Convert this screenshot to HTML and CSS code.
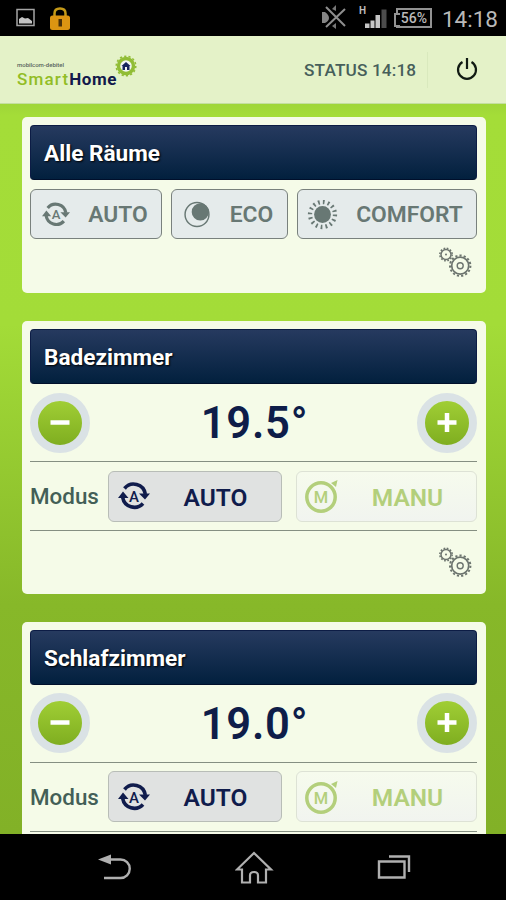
FILE: index.html
```
<!DOCTYPE html>
<html lang="de">
<head>
	<meta charset="utf-8">
	<title>SmartHome</title>
	<link rel="stylesheet" href="styles.css">
</head>
<body>
	<svg class="defs">
		<symbol id="auto" viewBox="0 0 32 30">
			<path d="M6.500 7.500A11.800 11.800 0 0 1 27.300 13M25 22.500A11.800 11.800 0 0 1 4.700 16.500" fill="none" stroke="currentColor" stroke-width="3.600"/>
			<path d="M21 12.500H32L27 18.500ZM0 17H10.500L5 10.500Z" fill="currentColor"/>
			<text x="16" y="20.500" text-anchor="middle" font-size="15" font-weight="500" fill="currentColor">A</text>
		</symbol>
		<symbol id="manu" viewBox="0 0 34 34">
			<circle cx="16" cy="18" r="14.200" fill="none" stroke="currentColor" stroke-width="3.500"/>
			<path d="M26 4L32.500 1L31 8Z" fill="currentColor"/>
			<text x="16" y="24" text-anchor="middle" font-size="16.500" font-weight="500" fill="currentColor">M</text>
		</symbol>
		<symbol id="moon" viewBox="0 0 26 26">
			<circle cx="13" cy="13" r="11.500" fill="none" stroke="currentColor" stroke-width="1.400"/>
			<circle cx="16.200" cy="10.500" r="8.300" fill="currentColor"/>
		</symbol>
		<symbol id="sun" viewBox="0 0 32 32">
			<circle cx="16" cy="16" r="8.700" fill="currentColor"/>
			<circle cx="16" cy="16" r="12.900" fill="none" stroke="currentColor" stroke-width="4.400" stroke-dasharray="1.800 3.266"/>
		</symbol>
		<symbol id="gears" viewBox="0 0 34 32">
			<g fill="none" stroke="currentColor">
				<circle cx="7" cy="7.500" r="5" stroke-width="1.500"/>
				<circle cx="7" cy="7.500" r="6.200" stroke-width="1.500" stroke-dasharray="1.700 1.546"/>
				<circle cx="21.200" cy="18.700" r="8.500" stroke-width="1.700"/>
				<circle cx="21.200" cy="18.700" r="10.200" stroke-width="2" stroke-dasharray="2.200 2.073"/>
				<circle cx="21.200" cy="18.700" r="3" stroke-width="1.400"/>
			</g>
			<circle cx="7" cy="7.500" r="1" fill="currentColor"/>
		</symbol>
		<symbol id="minus" viewBox="0 0 20 20">
			<path d="M.5 9.500H19.500" stroke="currentColor" stroke-width="4.500"/>
		</symbol>
		<symbol id="plus" viewBox="0 0 20 20">
			<path d="M.5 9.500H19.500M10 0V19" stroke="currentColor" stroke-width="4.500"/>
		</symbol>
	</svg>

	<div class="statusbar">
		<svg class="notif" viewBox="0 0 56 26">
			<rect x="1" y="2.500" width="17" height="16" fill="none" stroke="#a5a5a5" stroke-width="1.500"/>
			<path d="M3 16.500V12L6 10L9 11.500L12 11L16 14V16.500Z" fill="#c4c4c4"/>
			<path d="M38.500 9V6.500Q38.500 1.500 44 1.500T49.500 6.500V9" fill="none" stroke="#c59a18" stroke-width="2.500"/>
			<rect x="34" y="8.500" width="20" height="14.500" rx="2.500" fill="#dc9512"/>
			<rect x="42.500" y="12" width="3.500" height="7.500" fill="#48300a"/>
		</svg>
		<div class="system">
			<svg class="mute" viewBox="0 0 26 26">
				<path d="M1 7H4Q8 10 8 13Q8 16 4 18H1Z" fill="#858585"/>
				<path d="M5 2L24 21M24 4L5 22" stroke="#8e8e8e" stroke-width="2"/>
				<path d="M11 4L15 0V6ZM11 21L15 24V18Z" fill="#777"/>
			</svg>
			<svg class="signal" viewBox="0 0 30 24">
				<text x="0" y="9" font-size="10" font-weight="700" fill="#bbb">H</text>
				<path d="M6 18.500H10.500V23H6Z M11.500 15.500H15.500V23H11.500Z M16.500 10H21V23H16.500Z" fill="#c6c6c6"/>
				<path d="M22.500 4.500H27.500V23H22.500Z" fill="#4c4c4c"/>
			</svg>
			<span class="battery">56%</span>
			<span class="clock">14:18</span>
		</div>
	</div>

	<header>
		<div class="logo">
			<div class="brand">
				<div class="company">mobilcom-debitel</div>
				<div class="product"><span>Smart</span>Home</div>
			</div>
			<svg class="badge" viewBox="0 0 22 22">
				<circle cx="11" cy="11" r="7.500" fill="#f2f6f2" stroke="#91bd35" stroke-width="3.500"/>
				<circle cx="11" cy="11" r="9.800" fill="none" stroke="#91bd35" stroke-width="1.500" stroke-dasharray="2.200 2.198"/>
				<path d="M6.500 11L11 7L15.500 11H14.500V15H12V12H10V15H7.500V11Z" fill="#17245c"/>
			</svg>
		</div>
		<div class="status">STATUS 14:18</div>
		<svg class="power" viewBox="0 0 22 24">
			<path d="M6.500 5A9 9 0 1 0 15.500 5M11 1V12" fill="none" stroke="#111b13" stroke-width="2.200"/>
		</svg>
	</header>

	<main>
		<section class="card all">
			<h2>Alle Räume</h2>
			<div class="modes">
				<button class="m-auto"><svg><use href="#auto"/></svg><span>AUTO</span></button>
				<button class="m-eco"><svg><use href="#moon"/></svg><span>ECO</span></button>
				<button class="m-comfort"><svg><use href="#sun"/></svg><span>COMFORT</span></button>
			</div>
			<svg class="gears"><use href="#gears"/></svg>
		</section>

		<section class="card">
			<h2>Badezimmer</h2>
			<div class="temp">
				<button class="knob"><svg><use href="#minus"/></svg></button>
				<span class="value">19.5°</span>
				<button class="knob"><svg><use href="#plus"/></svg></button>
			</div>
			<div class="modus">
				<label>Modus</label>
				<button class="on"><svg><use href="#auto"/></svg><span>AUTO</span></button>
				<button class="off"><svg><use href="#manu"/></svg><span>MANU</span></button>
			</div>
			<svg class="gears"><use href="#gears"/></svg>
		</section>

		<section class="card">
			<h2>Schlafzimmer</h2>
			<div class="temp">
				<button class="knob"><svg><use href="#minus"/></svg></button>
				<span class="value">19.0°</span>
				<button class="knob"><svg><use href="#plus"/></svg></button>
			</div>
			<div class="modus">
				<label>Modus</label>
				<button class="on"><svg><use href="#auto"/></svg><span>AUTO</span></button>
				<button class="off"><svg><use href="#manu"/></svg><span>MANU</span></button>
			</div>
			<svg class="gears"><use href="#gears"/></svg>
		</section>
	</main>

	<nav>
		<svg viewBox="0 0 36 34">
			<path d="M9 8.500H22.500A9.200 9.200 0 0 1 22.500 27H6" fill="none" stroke="#b0b0b0" stroke-width="2.400"/>
			<path d="M0 8.500L13 3.500V13.500Z" fill="#b0b0b0"/>
		</svg>
		<svg class="home" viewBox="0 0 40 34">
			<path d="M19 2L36 18.500H31V31.500H23V24.500Q23 21 19 21T15 24.500V31.500H7V18.500H2Z" fill="none" stroke="#b0b0b0" stroke-width="2.200"/>
		</svg>
		<svg viewBox="0 0 36 34">
			<path d="M3 10.500H28.500V26.500H3ZM13 5.500H33V21" fill="none" stroke="#b0b0b0" stroke-width="2.400"/>
		</svg>
	</nav>
</body>
</html>
```
FILE: styles.css
```
*{
	box-sizing: border-box;
	font-family: Roboto, "Liberation Sans", sans-serif;
}
body{
	margin: 0;
	height: 900px;
	display: flex;
	flex-direction: column;
	overflow: hidden;
	background-color: #000;
}
.defs{
	display: none;
}
button{
	margin: 0;
	padding: 0;
	display: flex;
	align-items: center;
}

/* android bar */
.statusbar{
	flex: none;
	height: 36px;
	display: flex;
	justify-content: space-between;
	padding: 0 8px 0 16px;
	color: #b9b9b9;
}
.notif{
	width: 56px;
	height: 26px;
	margin-top: 7px;
}
.system{
	display: flex;
	align-items: center;
}
.mute{
	width: 26px;
	height: 26px;
	margin-right: 12px;
}
.signal{
	width: 30px;
	height: 24px;
	margin: -3px 7px 0 0;
}
.battery{
	position: relative;
	width: 36px;
	height: 20px;
	border: 2px solid #929292;
	font-size: 14px;
	font-weight: 500;
	line-height: 17px;
	text-align: center;
	margin-right: 10px;
}
.battery::before{
	content: "";
	position: absolute;
	left: -4px;
	top: 3px;
	width: 4px;
	height: 10px;
	border: 2px solid #929292;
	border-right: none;
	background-color: #000;
}
.clock{
	font-size: 22.5px;
	line-height: 36px;
	padding-top: 2px;
}

header{
	flex: none;
	height: 68px;
	display: flex;
	background-color: #e4f2c8;
	border-bottom: 1px solid #c4dfa0;
}
.logo{
	width: 286px;
	padding-left: 17px;
	display: flex;
}
.brand{
	width: 98px;
	padding-top: 25px;
}
.company{
	font-size: 6px;
	line-height: 8px;
	font-weight: 500;
	color: #59655d;
	white-space: nowrap;
}
.product{
	font-size: 17px;
	line-height: 20px;
	font-weight: 700;
	letter-spacing: .5px;
	color: #12194b;
	white-space: nowrap;
}
.product span{
	font-weight: 500;
	letter-spacing: 1.2px;
	color: #92bd25;
}
.badge{
	width: 22px;
	height: 22px;
	margin-top: 19px;
}
.status{
	width: 142px;
	height: 36px;
	margin-top: 16px;
	padding-left: 18px;
	font-size: 17.2px;
	font-weight: 500;
	line-height: 37px;
	letter-spacing: .15px;
	color: #475f5b;
	white-space: nowrap;
	border-right: 1px solid #d9e9bd;
}
.power{
	width: 22px;
	height: 24px;
	margin: 21px 0 0 28px;
}

main{
	height: 730px;
	flex: none;
	overflow: hidden;
	padding: 13px 20px 0 22px;
	background: linear-gradient(#9fd638 0, #a4dd38 12px, #a3dc38 220px, #87b829 500px, #82b127 730px);
}
.card{
	height: 272.5px;
	margin-bottom: 28px;
	padding: 8px 9px 0 8px;
	display: flex;
	flex-direction: column;
	background-color: #f5fbe8;
	border-radius: 5px;
}
.card.all{
	height: 176px;
}
h2{
	flex: none;
	margin: 0;
	height: 55px;
	padding-left: 13px;
	border-radius: 4px;
	border: 1px solid #0c1c45;
	border-bottom-color: #000f2b;
	background: linear-gradient(#263a5f, #02203e);
	color: #fff;
	font-size: 22.6px;
	font-weight: 700;
	line-height: 56px;
	text-shadow: 1px 1px 2px #000;
}
.modes{
	display: flex;
	gap: 9px;
	padding-top: 9px;
}
.modes button{
	height: 50px;
	padding-left: 11px;
	border: 1px solid #79817d;
	border-radius: 6px;
	background-color: #e5ebeb;
	color: #687874;
}
.modes span, .modus span{
	flex: 1;
	text-align: center;
	font-size: 22.8px;
	font-weight: 600;
	padding-top: 1px;
}
.modes span{
	padding-left: 5px;
}
.modes svg{
	width: 28px;
	height: 27px;
}
.modes .m-auto{
	width: 132px;
}
.modes .m-eco{
	width: 117px;
}
.modes .m-comfort{
	width: 180px;
	padding-left: 9px;
}
.m-comfort svg{
	width: 31px;
	height: 31px;
}
.gears{
	width: 34px;
	height: 32px;
	margin: 8px 4px 0 auto;
	color: #6c746e;
	flex: none;
}
.temp{
	height: 78px;
	flex: none;
	display: flex;
	justify-content: space-between;
	align-items: center;
	border-bottom: 1.5px solid #858f82;
}
.knob{
	width: 60px;
	height: 60px;
	border: 8px solid #dae2e5;
	border-radius: 50%;
	justify-content: center;
	background: linear-gradient(#a0ce35, #7fae20);
	color: #fff;
}
.knob svg{
	width: 20px;
	height: 20px;
}
.value{
	font-size: 43.5px;
	font-weight: 600;
	letter-spacing: .8px;
	padding: 2px 0 0 2px;
	color: #0e1d49;
}
.modus{
	height: 69px;
	flex: none;
	display: flex;
	align-items: center;
	border-bottom: 1.5px solid #858f82;
}
.modus label{
	width: 78px;
	font-size: 22.4px;
	font-weight: 500;
	color: #435f57;
}
.modus button{
	height: 51px;
	border-radius: 6px;
	padding-left: 9px;
}
.modus span{
	font-size: 24.5px;
	padding-top: 2px;
}
.modus .on{
	width: 174px;
	margin-right: 14px;
	color: #101c4c;
	background-color: #e0e2e1;
	border: 1px solid #b8bdb7;
}
.on svg{
	width: 32px;
	height: 30px;
}
.modus .off{
	width: 181px;
	color: #b3cf7b;
	background: linear-gradient(#f6fbed, #f1f4ef);
	border: 1px solid #dde2d5;
	padding-left: 8px;
}
.off svg{
	width: 34px;
	height: 34px;
}
.card:not(.all) .gears{
	margin-top: 16px;
}

nav{
	height: 66px;
	display: flex;
	justify-content: space-between;
	padding: 17px 94px 0 98px;
}
nav svg{
	width: 36px;
	height: 34px;
}
nav .home{
	width: 40px;
}
```
